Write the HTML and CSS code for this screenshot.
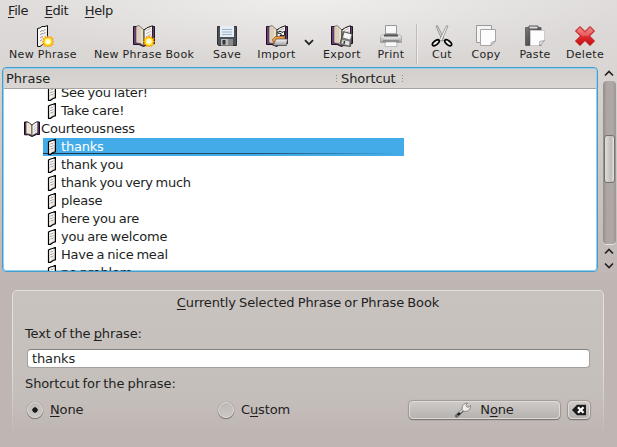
FILE: index.html
```html
<!DOCTYPE html>
<html lang="en">
<head>
<meta charset="utf-8">
<title>Phrase Books</title>
<link rel="stylesheet" href="styles.css">
</head>
<body>
<svg class="defs" width="0" height="0" aria-hidden="true">
  <defs>
    <linearGradient id="paper" x2="1" y2="1"><stop stop-color="#fff"/><stop offset=".55" stop-color="#f5f3ee"/><stop offset="1" stop-color="#d5c8b4"/></linearGradient>
    <linearGradient id="metal" x2="0" y2="1"><stop stop-color="#fafafa"/><stop offset="1" stop-color="#999"/></linearGradient>
    <linearGradient id="dark" x2="1" y2="1"><stop stop-color="#777"/><stop offset="1" stop-color="#333"/></linearGradient>
    <linearGradient id="red" x2="0" y2="1"><stop stop-color="#f07070"/><stop offset=".5" stop-color="#e03034"/><stop offset="1" stop-color="#c8080c"/></linearGradient>
    <radialGradient id="sun"><stop stop-color="#fff"/><stop offset=".35" stop-color="#fffbd0"/><stop offset=".6" stop-color="#ffe800"/><stop offset="1" stop-color="#ff9c00"/></radialGradient>
    <symbol id="page" viewBox="0 0 16 16">
      <path d="M4.500 3 6 2.300 9 1.300 11.400.4V12.700L9 13.500 6.500 15.300H4.500Z" fill="url(#paper)" stroke="#000" stroke-width="1.200"/>
      <path d="M6 5.500 7 4.500 8 5 9.500 3.500M6 8 7 7 8 7.500 9.500 6M6 10.500 7 9.500 8 10 9.500 8.500" fill="none" stroke="#888" stroke-width=".7"/>
    </symbol>
    <symbol id="book" viewBox="0 0 16 16">
      <path d="M.5 1H3.500L8 4 13 1H15.500V13.500H12.500L8 15.500 4.500 13.800H.5Z" fill="#6b2c76" stroke="#160b1a"/>
      <path d="M2 1 5 1.500 8 4.500V15L6 13.300 2 12.800Z" fill="#efe6d5" stroke="#39332c" stroke-width=".7"/>
      <path d="M8 4.500 10 2.300 13.800.5V12L10.500 13.300 8 15Z" fill="url(#paper)" stroke="#222" stroke-width=".7"/>
      <path d="M9.500 6 11 5 12.500 3.500M9.500 8.500 11 7.500 12.500 6M9.500 11 11 10 12.500 8.500" fill="none" stroke="#999" stroke-width=".6"/>
    </symbol>
    <symbol id="star" viewBox="0 0 12 12">
      <path d="M6 0 7 2.600 9 .8 9 3.200 11.500 3 9.800 5 12 6 9.800 7.200 11.300 9.200 9 9 8.800 11.400 7 9.700 6 12 5 9.700 3 11.400 3 9 .6 9.200 2.200 7.200 0 6 2.200 5 .6 3 3 3.200 3 .8 5 2.600Z" fill="url(#sun)" stroke="#ff9000" stroke-width=".6"/>
    </symbol>
    <symbol id="bigbook" viewBox="0 0 22 22">
      <path d="M.5 1.500H3.500L10.500 5 17.500 1.500H21.500V18.500H16L10.500 21.500 6 19.500H.5Z" fill="#74397d" stroke="#1d1022"/>
      <path d="M3 1.500 6 .6 11 5V21L7.500 18.500 3 17.800Z" fill="#eadfc9" stroke="#4b433b" stroke-width=".7"/>
      <path d="M5 2V17.500M7 3V18" stroke="#b9ae9c" stroke-width=".6"/>
      <path d="M11 5.500 13.500 3 19.500.7V16.500L14 18.500 11 21Z" fill="url(#paper)" stroke="#222"/>
      <path d="M13 6 15 4.500 18 3.500M13 9 15 7.500 18 6.500M13 12 15 10.500 18 9.500" fill="none" stroke="#999" stroke-width=".7"/>
    </symbol>
  </defs>
</svg>

<nav class="menubar">
  <span><u>F</u>ile</span><span><u>E</u>dit</span><span><u>H</u>elp</span>
</nav>

<div class="toolbar">
  <div class="tool">
    <svg width="22" height="22"><path d="M5.500 3.500 8 3 10 1.500 13 1.500 15.500.5V17.500L12 18.500 8 21.500H5.500Z" fill="url(#paper)" stroke="#111"/><path d="M8 7 10 5.500 11.500 6 13.500 4M8 10 10 8.500 11.500 9 13.500 7M8 13 10 11.500 11 12M8 16 10 14.500" fill="none" stroke="#888" stroke-width=".9"/><use href="#star" x="10" y="10.500" width="12" height="12"/></svg>
    <span>New Phrase</span>
  </div>
  <div class="tool">
    <svg width="22" height="22"><use href="#bigbook" width="22" height="22"/><use href="#star" x="10" y="10.500" width="12" height="12"/></svg>
    <span>New Phrase Book</span>
  </div>
  <div class="tool">
    <svg width="22" height="22"><path d="M1.500 1.500H20.500V20.500H2.500L1.500 19.500Z" fill="#4c5057" stroke="#2d3035"/><path d="M4 1H18V12H4Z" fill="#e5eef7"/><path d="M6 4.500H16M6 7H16M6 9.500H16" stroke="#9fb2c6"/><path d="M5 14H17V20.500H5Z" fill="#bbb"/><path d="M6.500 15H9.500V19.500H6.500Z" fill="#333"/><path d="M12 14H17V20H12Z" fill="#888"/></svg>
    <span>Save</span>
  </div>
  <div class="tool">
    <svg width="22" height="22"><use href="#bigbook" width="22" height="22"/><path d="M11 7.500Q14 5 17 7.500L18.500 6V10.500H14L15.500 9Q14 7.500 12 8.500Z" fill="#fff" stroke="#111" stroke-width=".9"/><path d="M6.500 14.500 9.500 11.500H18.500L19 15 20 20H8Z" fill="#f39c3c" stroke="#7a3c0c" stroke-width=".6"/><path d="M10 14H21.500L20.500 20.500H7Z" fill="url(#metal)" stroke="#444" stroke-width=".7"/></svg>
    <span>Import</span>
  </div>
  <div class="tool-arrow"><svg width="10" height="7"><path d="M1 1.200 5 5.200 9 1.200" fill="none" stroke="#222" stroke-width="1.700"/></svg></div>
  <div class="tool">
    <svg width="22" height="22"><use href="#bigbook" width="22" height="22"/><path d="M12.500 6.500 21.500 9 19.500 21.500 11 20.500 9 18Z" fill="#777" stroke="#333" stroke-width=".7"/><path d="M13.500 7.500 20.500 9.500 19 14.500 12 12.500Z" fill="#f6f6f6"/><path d="M11.500 15 18.500 16.500 18 20.500 10.500 18.500Z" fill="#e2e2e2"/><path d="M13.500 16 13 19" stroke="#333" stroke-width="1.500"/></svg>
    <span>Export</span>
  </div>
  <div class="tool">
    <svg width="22" height="22"><path d="M5.500.5H16.500V10H5.500Z" fill="url(#metal)" stroke="#999"/><path d="M6 1H16V8H6Z" fill="#f8f8f8"/><path d="M2 10H20L21.500 12V17.500H.5V12Z" fill="url(#metal)" stroke="#999" stroke-width=".7"/><path d="M4 9.500H18V12.500H4Z" fill="#555"/><path d="M4 11.500H18V14H4Z" fill="#ddd"/><path d="M3 16H19" stroke="#666"/><path d="M5.500 17H16.500L17 21.500H5Z" fill="#fafafa" stroke="#aaa" stroke-width=".7"/></svg>
    <span>Print</span>
  </div>
  <div class="separator"></div>
  <div class="tool">
    <svg width="22" height="22"><path d="M5 1 6.500.7 13.500 15 11.500 16Z" fill="#ddd" stroke="#777" stroke-width=".7"/><path d="M17 1 15.500.7 8.500 15 10.500 16Z" fill="#fff" stroke="#777" stroke-width=".7"/><ellipse cx="4.800" cy="17.800" rx="4" ry="2" transform="rotate(-38 4.800 17.800)" fill="#eee" stroke="#000" stroke-width="1.700"/><ellipse cx="17.200" cy="17.800" rx="4" ry="2" transform="rotate(38 17.200 17.800)" fill="#eee" stroke="#000" stroke-width="1.700"/></svg>
    <span>Cut</span>
  </div>
  <div class="tool">
    <svg width="22" height="22"><path d="M1.500.5H16.500V17.500H1.500Z" fill="#f4f4f4" stroke="#999"/><path d="M5.500 4.500H20.500V16L16 20.500H5.500Z" fill="#fdfdfd" stroke="#a5a5a5"/><path d="M15.500 21 16.500 17 20.500 16Z" fill="#ddd" stroke="#999" stroke-width=".7"/></svg>
    <span>Copy</span>
  </div>
  <div class="tool">
    <svg width="22" height="22"><path d="M1.500 2.500H17V20.500H1.500Z" fill="url(#dark)" stroke="#666"/><path d="M5 1H14V4H5Z" fill="#ddd" stroke="#555"/><path d="M6.500 5.500H20.500V16L16 20.500H6.500Z" fill="#fdfdfd" stroke="#ccc"/><path d="M15.500 21 15.800 16.500 20.500 15.500Z" fill="#eee" stroke="#888" stroke-width=".7"/></svg>
    <span>Paste</span>
  </div>
  <div class="tool">
    <svg width="22" height="22"><path d="M6 1.500 11 6.500 16 1.500 20.500 6 15.500 11 20.500 16 16 20.500 11 15.500 6 20.500 1.500 16 6.500 11 1.500 6Z" fill="url(#red)" stroke="#b5171b"/><path d="M6 3 11 8 16 3 19 6 14 11H8L3 6Z" fill="#fff" opacity=".2"/></svg>
    <span>Delete</span>
  </div>
</div>

<div class="browser">
  <div class="tree">
    <div class="tree-head"><span class="col-name">Phrase</span><i class="grip"></i><span class="col-key">Shortcut</span><i class="grip"></i></div>
    <div class="rows">
      <div class="row"><svg width="16" height="16"><use href="#page"/></svg><span>See you later!</span></div>
      <div class="row"><svg width="16" height="16"><use href="#page"/></svg><span>Take care!</span></div>
      <div class="row parent"><svg width="16" height="16"><use href="#book"/></svg><span>Courteousness</span></div>
      <div class="row selected"><svg width="16" height="16"><use href="#page"/></svg><span>thanks</span></div>
      <div class="row"><svg width="16" height="16"><use href="#page"/></svg><span>thank you</span></div>
      <div class="row tight"><svg width="16" height="16"><use href="#page"/></svg><span>thank you very much</span></div>
      <div class="row"><svg width="16" height="16"><use href="#page"/></svg><span>please</span></div>
      <div class="row"><svg width="16" height="16"><use href="#page"/></svg><span>here you are</span></div>
      <div class="row"><svg width="16" height="16"><use href="#page"/></svg><span>you are welcome</span></div>
      <div class="row"><svg width="16" height="16"><use href="#page"/></svg><span>Have a nice meal</span></div>
      <div class="row"><svg width="16" height="16"><use href="#page"/></svg><span>no problem</span></div>
    </div>
  </div>
  <div class="scrollbar">
    <svg class="up" width="10" height="7"><path d="M1 5.500 5 1.500 9 5.500" fill="none" stroke="#222" stroke-width="1.700"/></svg>
    <div class="track"><div class="thumb"></div></div>
    <svg class="up2" width="10" height="7"><path d="M1 5.500 5 1.500 9 5.500" fill="none" stroke="#222" stroke-width="1.700"/></svg>
    <svg class="down" width="10" height="7"><path d="M1 1.500 5 5.500 9 1.500" fill="none" stroke="#222" stroke-width="1.700"/></svg>
  </div>
</div>

<section class="group">
  <div class="group-title"><u>C</u>urrently Selected Phrase or Phrase Book</div>
  <div class="label">Text of the <u>p</u>hrase:</div>
  <div class="field">thanks</div>
  <div class="label second">Shortcut for the phrase:</div>
  <div class="options">
    <div class="option"><i class="radio on"></i><span><u>N</u>one</span></div>
    <div class="option"><i class="radio"></i><span>C<u>u</u>stom</span></div>
    <div class="button wide">
      <svg width="16" height="16"><path d="M1.500 14 8 8" stroke="#666" stroke-width="3.200" stroke-linecap="round"/><path d="M4 11 9 6.500" stroke="#e4e4e4" stroke-width="1.400"/><path d="M7 7.500 7.500 3.500 10 1.500 12.500 1 10.800 3.500 12.500 5.500 15.500 3.500 15 7 12.500 9 9 9.500Z" fill="#eee" stroke="#777" stroke-width=".8"/><path d="M3 12.700 5 11" stroke="#111" stroke-width="1.800"/></svg>
      <span>N<u>o</u>ne</span>
    </div>
    <div class="button clear">
      <svg width="14" height="12"><path d="M0 6 5 .8H14V11.200H5Z" fill="#1c1c1c"/><path d="M6 3.300 11.500 8.800M11.500 3.300 6 8.800" stroke="#fff" stroke-width="2.300"/></svg>
    </div>
  </div>
</section>
</body>
</html>
```
FILE: styles.css
```css
* { box-sizing: border-box; }

body {
  margin: 0;
  width: 617px;
  height: 447px;
  overflow: hidden;
  font: 13px/18px "DejaVu Sans", sans-serif;
  color: #221f1e;
  background:
    radial-gradient(ellipse 310px 64px at 50% 0, rgba(255, 255, 255, .5), rgba(255, 255, 255, 0)),
    linear-gradient(#dfdcdb 0, #d9d5d3 70px, #bfb6b3 285px, #bfb6b3 100%);
}

svg { display: block; flex: none; }
.defs { position: absolute; }
u { text-decoration: underline; text-decoration-thickness: 1px; text-underline-offset: 2px; text-decoration-skip-ink: none; }

.menubar { display: flex; gap: 16.500px; height: 24px; padding: 2px 8px 0; letter-spacing: -.4px; }

.toolbar {
  display: grid;
  grid-template-columns: 86px 116px 50px 49px 16px 50px 48px 4px 46px 42px 56px 44px;
  height: 43px;
}
.tool { display: flex; flex-direction: column; align-items: center; padding-top: 1px; white-space: nowrap; }
.tool span { margin-top: 1px; font-size: 11px; line-height: 14px; letter-spacing: .3px; }
.tool-arrow { display: flex; justify-content: center; padding-top: 15px; }
.separator { width: 2px; height: 40px; margin-left: 1px; border-left: 1px solid #c0bbb9; border-right: 1px solid #efedec; }

.browser { display: flex; height: 205px; padding-left: 2px; }
.tree {
  display: flex;
  flex-direction: column;
  width: 596px;
  border: 1px solid #439fd0;
  border-radius: 4px;
  overflow: hidden;
  background: #fff;
  box-shadow: inset 0 0 0 1px #96cdea;
  padding: 1px 1px 0;
}
.tree-head {
  display: flex;
  align-items: center;
  flex: none;
  height: 20px;
  padding-left: 2px;
  background: linear-gradient(#d3cfcd, #d9d6d4);
  border-bottom: 1px solid #aaa4a1;
}
.col-name { width: 330px; }
.col-key { width: 61px; margin-left: 4px; letter-spacing: -.1px; }
.grip { width: 1px; height: 8px; background: repeating-linear-gradient(#8f8987 0 1px, transparent 1px 3px); }
.rows { flex: 1; overflow: hidden; letter-spacing: -.2px; word-spacing: -1px; }
.row { display: flex; align-items: center; gap: 1px; height: 18px; width: 361px; margin-left: 39px; padding-left: 1px; }
.row:first-child { margin-top: -5px; }
.row.parent { margin-left: 19px; }
.row.tight { letter-spacing: -.3px; }
.row.selected {
  color: #fff;
  background: linear-gradient(90deg, #1b3347, #20516f 60%, #43ace8) 0 15px / 100% 1px no-repeat #43ace8;
}

.scrollbar { display: flex; flex-direction: column; align-items: center; width: 14px; margin-left: 4px; }
.up { margin: 3px 0 4px; }
.track { width: 13px; height: 163px; padding: 54px 1px 0; border-radius: 4px; background: linear-gradient(90deg, #948e8b, #aea7a4 30%, #aea7a4 75%, #9c9693); box-shadow: 0 1px #e5e2e0; }
.thumb { height: 48px; border: 1px solid #76716e; border-radius: 3px; background: linear-gradient(90deg, #dedbd9, #c0bcb9 70%, #e7e5e3); }
.up2 { margin-top: 4px; }
.down { margin-top: 7px; }

.group {
  position: relative;
  width: 592px;
  height: 145px;
  margin: 18px 0 0 12px;
  padding: 4px 14px;
  border-radius: 5px 5px 0 0;
  background: linear-gradient(#c9c3c0, #c5bfbc 70%, rgba(191, 182, 179, 0));
  letter-spacing: -.12px;
  word-spacing: -.8px;
}
.group::before {
  content: "";
  position: absolute;
  inset: 0;
  border: 1px solid #e2dfdd;
  border-bottom: 0;
  border-radius: 5px 5px 0 0;
  box-shadow: 0 0 1px #8f8986;
  mask: linear-gradient(#000 50%, transparent);
  pointer-events: none;
}
.group-title { text-align: center; }
.label { margin-top: 13px; margin-left: -1px; }
.field {
  height: 19px;
  margin: 6px 0 0 1px;
  padding-left: 4px;
  width: 563px;
  border: 1px solid #a5a09d;
  border-top-color: #85807e;
  border-radius: 4px;
  background: #fff;
  line-height: 18px;
}
.label.second { margin-top: 7px; }
.options { display: flex; align-items: center; height: 20px; margin-top: 7px; }
.option { display: flex; align-items: center; width: 191px; padding-left: 1px; gap: 7px; }
.radio {
  width: 16px;
  height: 16px;
  border: 1px solid #dad7d5;
  border-radius: 50%;
  background: linear-gradient(#bebab7, #cbc7c4);
  box-shadow: 0 1px 1px #77716e, 0 0 1px #77716e;
}
.radio.on { background: radial-gradient(circle at 50% 50%, #1c1b1b 2.4px, transparent 3px), linear-gradient(#bebab7, #cbc7c4); }
.button {
  display: flex;
  align-items: center;
  justify-content: center;
  height: 18px;
  border: 1px solid #dedbd9;
  border-radius: 4px;
  background: linear-gradient(#cecac8, #b6b2af);
  box-shadow: 0 1px 1px #77716e, 0 0 1px 1px #a19b98;
}
.wide { width: 151px; margin-left: 1px; gap: 9px; }
.clear { width: 22px; margin-left: 8px; }
```
